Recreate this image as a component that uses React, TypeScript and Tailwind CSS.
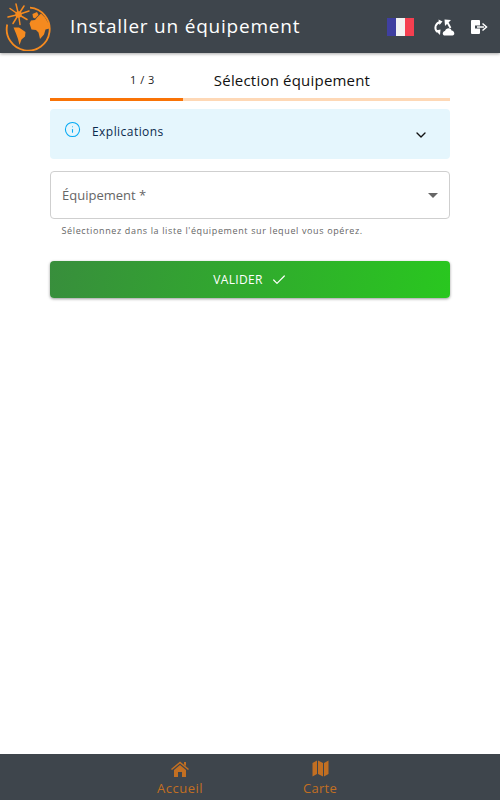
import { Info, ChevronDown, Check } from 'lucide-react';

function GlobeLogo() {
    return (
        <svg width="48" height="48" viewBox="4 2.5 48 48" className="text-[#f58a1f] shrink-0">
            <path d="M30 7.2 A21.5 21.5 0 1 1 7.2 24" fill="none" stroke="currentColor" strokeWidth="1.8" />
            {/* Star burst */}
            <g stroke="currentColor" strokeWidth="1.5" strokeLinecap="round">
                <path d="M18.5 14 L16 3.5" />
                <path d="M18.5 14 L24 5.5" />
                <path d="M18.5 14 L29 10.5" />
                <path d="M18.5 14 L27 19" />
                <path d="M18.5 14 L20 24" />
                <path d="M18.5 14 L13 23" />
                <path d="M18.5 14 L8 16.5" />
                <path d="M18.5 14 L10 8" />
            </g>
            <circle cx="18.5" cy="14" r="3.2" fill="currentColor" />
            {/* Continents */}
            <path
                d="M29.5 23 L31 20 L35 19.5 L37 17 L41 13 L45 17 L49 24 L49.5 28 L45.5 29 L44 34 L40 38.5 L38.5 32 L36 29.5 L31.5 29 Z"
                fill="currentColor"
            />
            <path d="M32.5 13.5 L37 11.5 L38.5 14.5 L35 18 L33 17 Z" fill="currentColor" />
            <path d="M13.5 27 L19 27 L25.5 31.5 L25 36 L21.5 39 L19.5 44.5 L18 38.5 L16 33 Z" fill="currentColor" />
        </svg>
    );
}

function FlagFr() {
    return (
        <div className="flex w-[27px] h-[18px]">
            <div className="flex-1 bg-[#3f3fa0]" />
            <div className="flex-1 bg-[#f2f2f2]" />
            <div className="flex-1 bg-[#f53f50]" />
        </div>
    );
}

function SwapIcon() {
    return (
        <svg width="22" height="18" viewBox="0 0 22 18" className="text-white">
            <path d="M7.5 4 C2.5 5 0.5 10.5 4.5 14" fill="none" stroke="currentColor" strokeWidth="1.9" />
            <path d="M5.5 1.5 L9.5 3.5 L6.5 7 Z" fill="currentColor" />
            <path d="M2.5 12.5 L7.5 11.5 L7 17 Z" fill="currentColor" />
            <path d="M11.5 1.5 L18 2 L12 8 Z" fill="currentColor" />
            <path d="M14.5 4.5 L17.5 10" stroke="currentColor" strokeWidth="1.9" />
            <path
                d="M12 17.5 C9 17.5 9 13.5 12 13 C13 9.5 18 9.5 18.5 12.5 C21.5 12.5 22.5 17.5 19.5 17.5 Z"
                fill="currentColor"
            />
        </svg>
    );
}

function LogoutIcon() {
    return (
        <svg width="18" height="16" viewBox="0 0 18 16" className="text-white">
            <path d="M2 1 H9 A1 1 0 0 1 10 2 V6.5 H5 V9.5 H10 V14 A1 1 0 0 1 9 15 H2 A1 1 0 0 1 1 14 V2 A1 1 0 0 1 2 1 Z" fill="currentColor" />
            <path d="M7 8 H14" stroke="currentColor" strokeWidth="1.5" />
            <path d="M12.5 4.5 L16.5 8 L12.5 11.5" fill="none" stroke="currentColor" strokeWidth="1.5" />
        </svg>
    );
}

function MapIcon() {
    return (
        <svg width="17" height="17" viewBox="0 0 17 17" className="text-[#c26f22]">
            <path d="M0.5 3 L5 0.5 V14 L0.5 16.5 Z" fill="currentColor" />
            <path d="M6 0.5 L11 3 V16.5 L6 14 Z" fill="currentColor" />
            <path d="M12 3 L16.5 0.5 V14 L12 16.5 Z" fill="currentColor" />
        </svg>
    );
}

function HomeSolid() {
    return (
        <svg width="18" height="16" viewBox="0 0 18 16" className="text-[#c26f22]">
            <path d="M9 0.5 L18 8 L17 9 L9 2.5 L1 9 L0 8 Z" fill="currentColor" />
            <path d="M13 1 H15 V5 L13 3.5 Z" fill="currentColor" />
            <path d="M3 9 L9 4 L15 9 V16 H11 V11 H7 V16 H3 Z" fill="currentColor" />
        </svg>
    );
}

export default function App() {
    return (
        <div className="h-screen flex flex-col bg-white font-['Open_Sans','Noto_Sans',sans-serif]">
            {/* Header */}
            <header className="h-[53px] shrink-0 bg-[#3e454c] flex items-center pl-[4px] pr-[12px] shadow-[0_1px_3px_rgba(0,0,0,0.35)] z-10">
                <GlobeLogo />
                <h1 className="ml-[18px] flex-1 text-white text-[19px] tracking-[0.78px]">Installer un équipement</h1>
                <div className="flex items-center">
                    <FlagFr />
                    <div className="ml-[19px]"><SwapIcon /></div>
                    <div className="ml-[15px]"><LogoutIcon /></div>
                </div>
            </header>

            <main className="flex-1 px-[50px]">
                {/* Stepper */}
                <div className="flex h-[45px] items-center pt-[9px] pl-[80px]">
                    <span className="text-[11px] text-[#222] tracking-[0.5px]">1 / 3</span>
                    <span className="ml-[59px] text-[15px] text-[#111] tracking-[0.2px]">Sélection équipement</span>
                </div>
                <div className="flex h-[3px] bg-[#fed8b6]">
                    <div className="w-[133px] bg-[#f97306]" />
                </div>

                {/* Explications */}
                <div className="mt-[8px] h-[50px] bg-[#e5f6fd] rounded-[4px] flex items-start pl-[14px] pr-[21px] pt-[12px]">
                    <Info size={17} strokeWidth={1.5} className="text-[#03a9f4] shrink-0" />
                    <span className="ml-[11px] mt-[2px] text-[12px] leading-[17px] text-[#0b2a4d] tracking-[0.45px]">Explications</span>
                    <ChevronDown size={16} strokeWidth={2} className="ml-auto mt-[6px] text-[#111]" />
                </div>

                {/* Select */}
                <div className="mt-[12px] h-[48px] border border-[#cfcfcf] rounded-[4px] flex items-center pl-[11px] pr-[11px]">
                    <span className="flex-1 mt-[1px] text-[13px] text-[#666]">Équipement *</span>
                    <div className="w-0 h-0 border-l-[5px] border-r-[5px] border-t-[5px] border-l-transparent border-r-transparent border-t-[#666]" />
                </div>
                <p className="mt-[5px] ml-[11.5px] text-[9px] leading-[14px] text-[#666] tracking-[0.63px]">
                    Sélectionnez dans la liste l'équipement sur lequel vous opérez.
                </p>

                {/* Submit */}
                <button className="mt-[23px] w-full h-[37px] rounded-[4px] bg-[linear-gradient(100deg,#388e3c,#29c71f)] shadow-[0_1px_3px_rgba(0,0,0,0.4)] flex items-center justify-center text-white text-[12px] font-medium tracking-[0.35px]">
                    VALIDER
                    <Check size={16} strokeWidth={1.8} className="ml-[8px]" />
                </button>
            </main>

            {/* Bottom nav */}
            <nav className="h-[46px] shrink-0 bg-[#3e454c] flex justify-center">
                <div className="w-[140px] flex flex-col items-center pt-[7px]">
                    <HomeSolid />
                    <span className="text-[13px] leading-[18px] mt-[2px] text-[#c26f22] tracking-[0.5px]">Accueil</span>
                </div>
                <div className="w-[140px] flex flex-col items-center pt-[6px]">
                    <MapIcon />
                    <span className="text-[13px] leading-[18px] mt-[2px] text-[#c26f22] tracking-[0.3px]">Carte</span>
                </div>
            </nav>
        </div>
    );
}
